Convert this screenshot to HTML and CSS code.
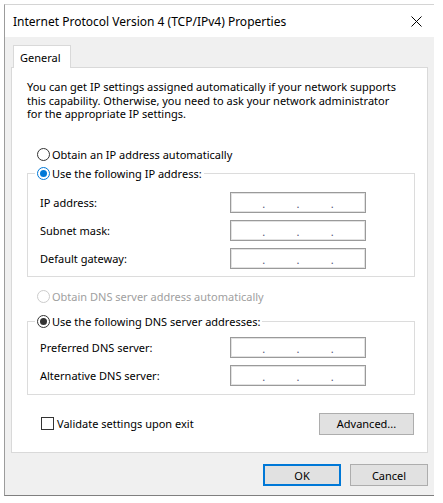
FILE: index.html
```html
<!DOCTYPE html>
<html lang="en">
<head>
    <meta charset="UTF-8">
    <meta name="viewport" content="width=device-width, initial-scale=1.0">
    <title>Internet Protocol Version 4 (TCP/IPv4) Properties</title>
    <link rel="stylesheet" href="styles.css">
</head>
<body>
    <div class="window">
        <div class="titlebar">
            <span class="title">Internet Protocol Version 4 (TCP/IPv4) Properties</span>
            <svg class="close" width="11" height="11" viewBox="0 0 11 11">
                <path d="M0.5 0.5 L10.5 10.5 M10.5 0.5 L0.5 10.5" stroke="#000" stroke-width="1" fill="none"/>
            </svg>
        </div>
        <div class="content">
            <div class="tabs">
                <div class="tab">General</div>
            </div>
            <div class="panel">
                <p class="intro">You can get IP settings assigned automatically if your network supports this capability. Otherwise, you need to ask your network administrator for the appropriate IP settings.</p>

                <div class="option">
                    <span class="radio"></span>
                    <span>Obtain an IP address automatically</span>
                </div>

                <fieldset class="group group-ip">
                    <legend class="option">
                        <span class="radio checked focus"></span>
                        <span>Use the following IP address:</span>
                    </legend>
                    <div class="field">
                        <span class="label">IP address:</span>
                        <div class="ip"><span>.</span><span>.</span><span>.</span></div>
                    </div>
                    <div class="field">
                        <span class="label">Subnet mask:</span>
                        <div class="ip"><span>.</span><span>.</span><span>.</span></div>
                    </div>
                    <div class="field">
                        <span class="label">Default gateway:</span>
                        <div class="ip"><span>.</span><span>.</span><span>.</span></div>
                    </div>
                </fieldset>

                <div class="option disabled">
                    <span class="radio"></span>
                    <span>Obtain DNS server address automatically</span>
                </div>

                <fieldset class="group group-dns">
                    <legend class="option">
                        <span class="radio checked"></span>
                        <span>Use the following DNS server addresses:</span>
                    </legend>
                    <div class="field">
                        <span class="label">Preferred DNS server:</span>
                        <div class="ip"><span>.</span><span>.</span><span>.</span></div>
                    </div>
                    <div class="field">
                        <span class="label">Alternative DNS server:</span>
                        <div class="ip"><span>.</span><span>.</span><span>.</span></div>
                    </div>
                </fieldset>

                <div class="panel-footer">
                    <div class="option check-option">
                        <span class="checkbox"></span>
                        <span>Validate settings upon exit</span>
                    </div>
                    <button class="btn btn-advanced">Advanced...</button>
                </div>
            </div>
            <div class="actions">
                <button class="btn btn-default">OK</button>
                <button class="btn">Cancel</button>
            </div>
        </div>
    </div>
</body>
</html>
```

FILE: styles.css
```css
body {
    margin: 0;
    background-color: #ffffff;
    font-family: "Noto Sans", "Open Sans", sans-serif;
    font-size: 11px;
    color: #000000;
}

.window {
    margin: 4px 0 0 4px;
    width: 429px;
    height: 490px;
    border-top: 1px solid #d4d4d4;
    border-left: 1px solid #9c9c9c;
    border-bottom: 1px solid #7f7f7f;
    display: flex;
    flex-direction: column;
}

.titlebar {
    height: 32px;
    background-color: #ffffff;
    display: flex;
    align-items: center;
    justify-content: space-between;
    padding: 0 12px 0 8px;
    flex-shrink: 0;
}

.title {
    font-size: 12px;
}

.content {
    flex: 1;
    background-color: #f0f0f0;
    padding: 7px 6px 0 6px;
}

.tabs {
    display: flex;
    height: 23px;
}

.tab {
    margin-left: 2px;
    padding: 0 9px 0 6px;
    background-color: #ffffff;
    border: 1px solid #d9d9d9;
    border-bottom: none;
    display: flex;
    align-items: center;
    position: relative;
    top: 1px;
}

.panel {
    box-sizing: border-box;
    height: 386px;
    background-color: #ffffff;
    border: 1px solid #d9d9d9;
    padding: 12px 12px 0 15px;
}

.intro {
    margin: 0;
    max-width: 374px;
    line-height: 13.5px;
}

.option {
    display: flex;
    align-items: center;
    gap: 2px;
    height: 16px;
}

.panel > .option {
    margin-top: 26px;
    padding-left: 10px;
}

.panel > .option.disabled {
    margin-top: 12px;
    color: #a0a0a0;
}

.radio {
    box-sizing: border-box;
    width: 13px;
    height: 13px;
    border: 1px solid #333333;
    border-radius: 50%;
    background-color: #ffffff;
    display: flex;
    align-items: center;
    justify-content: center;
}

.disabled .radio {
    border-color: #cccccc;
}

.radio.checked::after {
    content: "";
    width: 7px;
    height: 7px;
    border-radius: 50%;
    background-color: #333333;
}

.radio.focus {
    border-color: #0078d7;
}

.radio.focus::after {
    background-color: #0078d7;
}

.group {
    margin: 3px 0 0 0;
    padding: 10px 0 7px 12px;
    border: 1px solid #dcdcdc;
    display: flex;
    flex-direction: column;
    gap: 7px;
}

.group-dns {
    margin-top: 9px;
    padding-top: 7px;
    padding-bottom: 8px;
}

.group legend {
    margin-left: -5px;
    padding: 0 2px;
}

.field {
    display: flex;
    align-items: center;
    height: 21px;
}

.label {
    width: 190px;
}

.ip {
    box-sizing: border-box;
    width: 136px;
    height: 21px;
    border: 1px solid #9a9a9a;
    box-shadow: inset 0 0 0 1px #e2e2e2;
    background-color: #ffffff;
    display: flex;
    justify-content: space-evenly;
    align-items: flex-end;
    line-height: 16px;
    color: #555577;
}

.panel-footer {
    margin-top: 18px;
    padding-left: 14px;
    display: flex;
    justify-content: space-between;
    align-items: center;
}

.check-option {
    gap: 3px;
}

.checkbox {
    box-sizing: border-box;
    width: 13px;
    height: 13px;
    border: 1px solid #333333;
    background-color: #ffffff;
}

.btn {
    box-sizing: border-box;
    width: 78px;
    height: 22px;
    padding: 0;
    font-family: inherit;
    font-size: 11px;
    color: #000000;
    background-color: #e1e1e1;
    border: 1px solid #adadad;
}

.btn-advanced {
    width: 95px;
    margin-right: 1px;
}

.btn-default {
    border: 2px solid #0078d7;
}

.actions {
    display: flex;
    justify-content: flex-end;
    gap: 9px;
    margin-top: 11px;
}
```
